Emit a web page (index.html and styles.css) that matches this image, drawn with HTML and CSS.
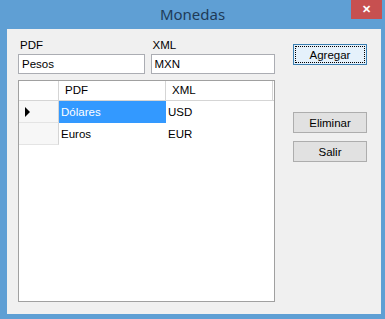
FILE: index.html
```html
<!DOCTYPE html>
<html lang="es">
<head>
    <meta charset="UTF-8">
    <title>Monedas</title>
    <link rel="stylesheet" href="styles.css">
</head>
<body>
    <div class="window">
        <div class="titlebar">
            <span class="title">Monedas</span>
            <span class="close">&#x2715;</span>
        </div>
        <div class="client">
            <div class="left">
                <div class="fields">
                    <div class="field field-pdf">
                        <label>PDF</label>
                        <div class="textbox">Pesos</div>
                    </div>
                    <div class="field field-xml">
                        <label>XML</label>
                        <div class="textbox">MXN</div>
                    </div>
                </div>
                <div class="grid">
                    <div class="row head">
                        <div class="rowhead"></div>
                        <div class="cell">PDF</div>
                        <div class="cell">XML</div>
                    </div>
                    <div class="row">
                        <div class="rowhead"><span class="arrow"></span></div>
                        <div class="cell selected">Dólares</div>
                        <div class="cell">USD</div>
                    </div>
                    <div class="row">
                        <div class="rowhead"></div>
                        <div class="cell">Euros</div>
                        <div class="cell">EUR</div>
                    </div>
                </div>
            </div>
            <div class="right">
                <button class="btn default"><span>Agregar</span></button>
                <button class="btn eliminar">Eliminar</button>
                <button class="btn">Salir</button>
            </div>
        </div>
    </div>
</body>
</html>
```

FILE: styles.css
```css
body {
    margin: 0;
    font-family: 'Liberation Sans', Arial, sans-serif;
    font-size: 11.5px;
    color: #000;
}
.window {
    width: 385px;
    height: 319px;
    background-color: #5f9fd4;
    display: flex;
    flex-direction: column;
    padding: 0 4px 5px 7px;
    box-sizing: border-box;
}
.titlebar {
    height: 29px;
    position: relative;
    display: flex;
    justify-content: center;
    align-items: center;
    padding-bottom: 2px;
    box-sizing: border-box;
}
.title {
    font-family: 'Noto Sans', sans-serif;
    font-size: 15px;
    color: #1e3b58;
    margin-right: 3px;
}
.close {
    position: absolute;
    top: 0;
    right: -1px;
    width: 31px;
    height: 19px;
    background-color: #c75050;
    color: #fff;
    font-size: 11px;
    font-weight: bold;
    display: flex;
    justify-content: center;
    align-items: center;
}
.client {
    flex: 1;
    background-color: #f0f0f0;
    display: flex;
    padding: 9px 0 0 11px;
}
.left {
    width: 257px;
}
.fields {
    display: flex;
}
.field {
    display: flex;
    flex-direction: column;
}
.field-pdf {
    width: 127px;
}
.field-xml {
    width: 125px;
    margin-left: 6px;
}
.field label {
    height: 14px;
    line-height: 14px;
    margin-bottom: 2px;
    padding-left: 2px;
}
.textbox {
    height: 20px;
    box-sizing: border-box;
    border: 1px solid #abadb3;
    background-color: #fff;
    padding: 0 3px;
    line-height: 18px;
}
.grid {
    margin-top: 6px;
    height: 222px;
    box-sizing: border-box;
    border: 1px solid #a0a0a0;
    background-color: #fff;
}
.row {
    display: flex;
    height: 22px;
}
.row.head {
    height: 19px;
    border-bottom: 1px solid #d5d5d5;
}
.rowhead {
    width: 40px;
    border-right: 1px solid #d5d5d5;
    border-bottom: 1px solid #e4e4e4;
    background-color: #f7f7f7;
    display: flex;
    align-items: center;
    padding-left: 6px;
    box-sizing: border-box;
}
.head .rowhead {
    background-color: #fff;
    border-bottom: none;
}
.arrow {
    width: 0;
    height: 0;
    border-top: 5px solid transparent;
    border-bottom: 5px solid transparent;
    border-left: 5px solid #000;
}
.cell {
    width: 107px;
    padding-left: 2px;
    box-sizing: border-box;
    line-height: 22px;
}
.head .cell {
    line-height: 19px;
    padding-left: 6px;
    border-right: 1px solid #d5d5d5;
}
.selected {
    background-color: #3399ff;
    color: #fff;
}
.right {
    display: flex;
    flex-direction: column;
    margin-left: 18px;
    padding-top: 6px;
}
.btn {
    width: 74px;
    height: 21px;
    box-sizing: border-box;
    border: 1px solid #adadad;
    background-color: #e1e1e1;
    font-family: inherit;
    font-size: 11.5px;
    padding: 0;
    margin: 0;
    color: #000;
}
.btn.default {
    border-color: #3c7fb1;
    padding: 1px;
    background-color: #e5f1fb;
}
.btn.default span {
    display: block;
    height: 17px;
    line-height: 16px;
    border: 1px dotted #000;
    box-sizing: border-box;
}
.eliminar {
    margin-top: 47px;
    margin-bottom: 8px;
}
```
